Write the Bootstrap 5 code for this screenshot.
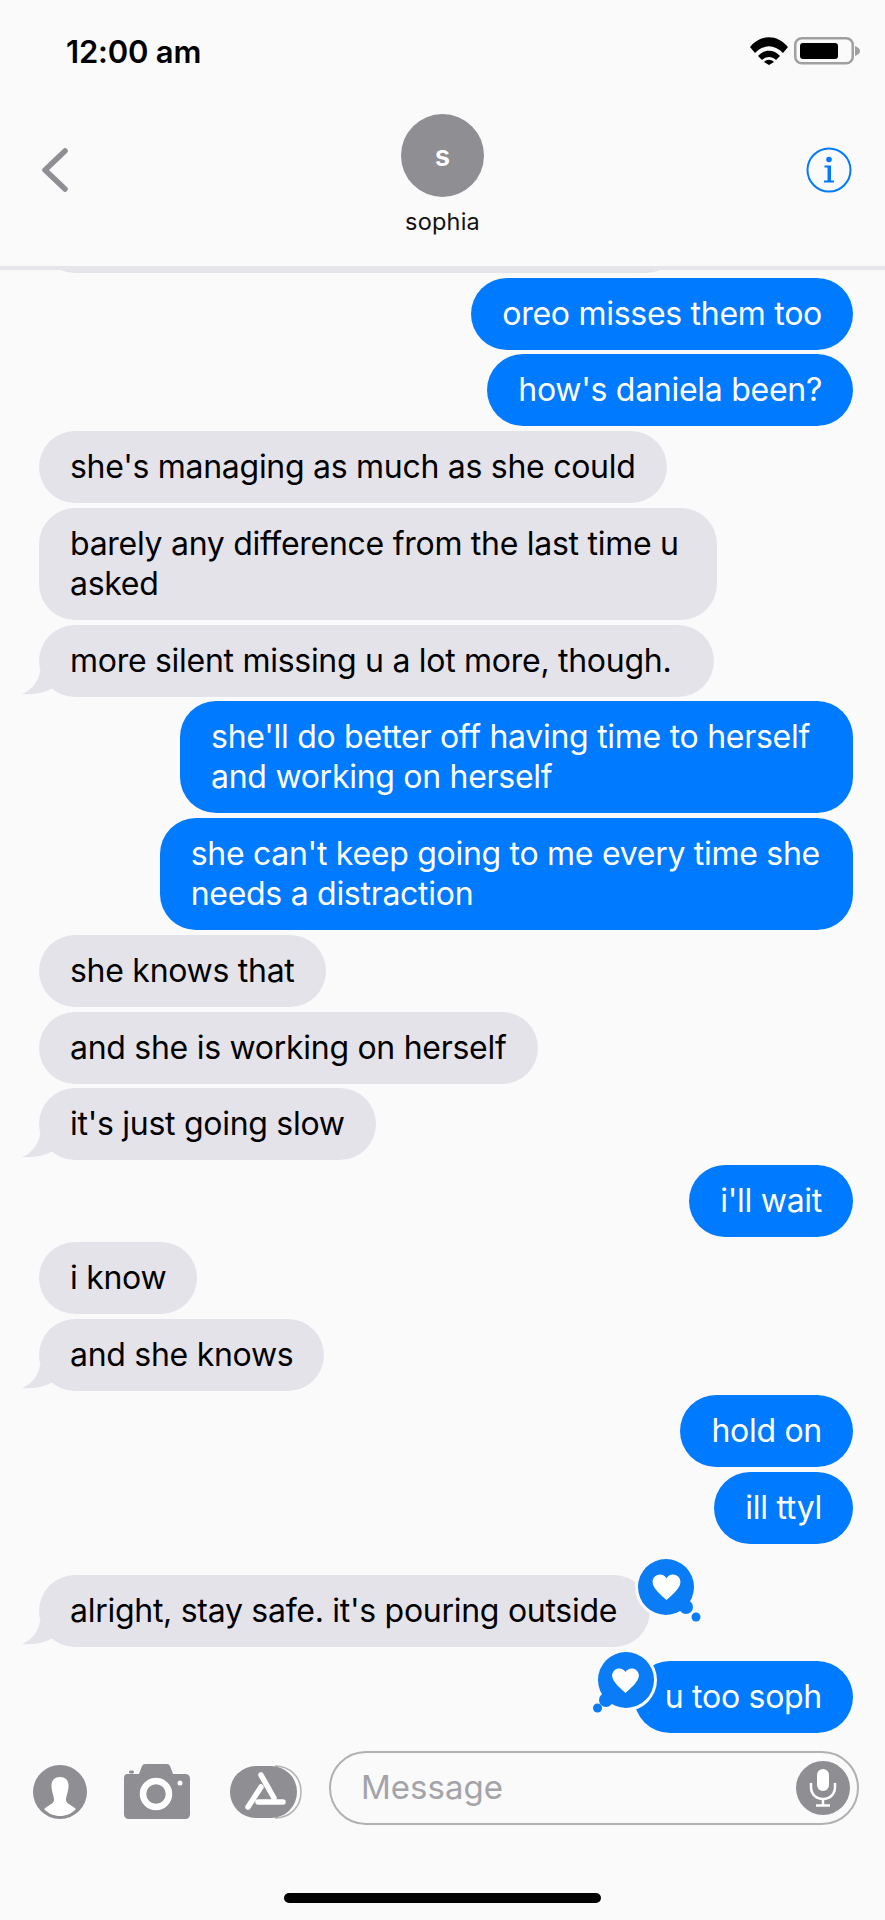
<!DOCTYPE html>
<html lang="en">
<head>
<meta charset="utf-8">
<title>Messages</title>
<link rel="stylesheet" href="https://cdn.jsdelivr.net/npm/bootstrap@5.3.0/dist/css/bootstrap.min.css">
<style>
html,body{margin:0;background:#fafafa}
.phone{width:885px;height:1920px;overflow:hidden;background:#fafafa;font-family:Inter,"Liberation Sans",sans-serif}
.statusbar{height:114px;padding:0 25px 0 66px;flex:none}
.clock{font-size:31px;font-weight:600;line-height:36px;color:#000;margin-top:34px;letter-spacing:-.2px}
.status-icons{margin-top:37px}
.chathead{height:156px;padding:0 33px 0 41px;border-bottom:4px solid #e5e5ea;flex:none;position:relative;z-index:2;background:#fafafa}
.back{margin-top:34px}
.person{position:absolute;left:0;right:0;top:0}
.avatar{width:83px;height:83px;background:#8e8e93;color:#fff;font-size:28px;font-weight:600}
.pname{font-size:23.5px;line-height:28px;margin-top:11px;color:#111;letter-spacing:.2px}
.info{margin-top:33px}
.thread{flex:1 1 0;min-height:0;overflow:hidden;padding:0 32px 0 39px}
.bubble{position:relative;font-size:32px;letter-spacing:-.28px;line-height:40px;padding:16px 31px;border-radius:36px;white-space:nowrap;margin-top:4.75px;flex:none}
.bubble-in{background:#e5e3ea;color:#000;align-self:flex-start}
.bubble-out{background:#007aff;color:#fff;align-self:flex-end}
.bubble-clipped{width:643px;height:72px}
.wrap-s{padding-right:33px}
.wrap-m{padding-right:38px}
.wrap-l{padding-right:43px}
.after-gap{margin-top:31px}
.after-react{margin-top:14px}
.tail{position:absolute;left:-21px;bottom:0;width:50px;height:26px}
.tapback{position:absolute;width:86px;height:84px}
.tb-in{right:-71px;top:-19px}
.tb-out{left:-41px;top:-12px}
.composer{height:187px;flex:none;padding:18px 26px 0 33px}
.tool-row{height:73px}
.tool-icon{margin-top:8px;flex:none}
.tool-cam{margin-left:36px}
.tool-app{margin-left:39px}
.msgbox{flex:1;height:74px;margin-left:27px;border:2px solid #b1b1b1;border-radius:37px;padding:0 7px 0 30px;color:#a4a4a8;font-size:33px}
.homebar{width:317px;height:10px;border-radius:5px;background:#000;margin:69px 0 0 251px}
</style>
</head>
<body>
<div class="phone d-flex flex-column">
  <svg width="0" height="0" class="position-absolute"><defs>
    <symbol id="tailshape" viewBox="0 0 50 26"><path d="M22 0 C21 10 14 19 4 23 C16 24 26 22 35 17 L48 10 L48 0Z" fill="#e5e3ea"/></symbol>
    <symbol id="heart" viewBox="0 0 32 28"><path d="M16 28 C12 24 1 16 1 8.500 C1 3.500 5 0.500 9 0.500 C12 0.500 14.500 2 16 4.500 C17.500 2 20 0.500 23 0.500 C27 0.500 31 3.500 31 8.500 C31 16 20 24 16 28Z" fill="#fff"/></symbol>
  </defs></svg>

  <div class="statusbar d-flex justify-content-between align-items-start">
    <div class="clock">12:00 am</div>
    <svg class="status-icons" width="111" height="28" viewBox="0 0 111 28">
      <path d="M1 10 C12 -3 28 -3 39 10 L34 16 C25 7 15 7 6 16Z M9 19 C15 12 25 12 31 19 L27 23 C23 19 17 19 13 23Z M15 25 C18 22 22 22 25 25 L20 28Z" fill="#000"/>
      <rect x="46.250" y="1.250" width="57.500" height="25" rx="6.500" fill="none" stroke="#a0a0a0" stroke-width="2.500"/>
      <rect x="51" y="6" width="38" height="16" rx="3" fill="#000"/>
      <path d="M106 9 C109 10 111 12 111 14 C111 16 109 18 106 19Z" fill="#a0a0a0"/>
    </svg>
  </div>

  <div class="chathead d-flex justify-content-between align-items-start">
    <svg class="back" width="28" height="44" viewBox="0 0 28 44"><path d="M24 3 L4 22 L24 41" fill="none" stroke="#8e8e93" stroke-width="5.500" stroke-linecap="round" stroke-linejoin="round"/></svg>
    <div class="person d-flex flex-column align-items-center">
      <div class="avatar rounded-circle d-flex align-items-center justify-content-center">s</div>
      <div class="pname">sophia</div>
    </div>
    <svg class="info" width="46" height="46" viewBox="0 0 46 46"><circle cx="23" cy="23" r="21.500" fill="none" stroke="#007aff" stroke-width="2"/><circle cx="23" cy="12.500" r="2.800" fill="#007aff"/><path d="M18.500 18.500 H25 V33.500 H28 V35.500 H18 V33.500 H21.500 V20.500 H18.500Z" fill="#007aff"/></svg>
  </div>

  <div class="thread d-flex flex-column justify-content-end">
    <div class="bubble bubble-in bubble-clipped"></div>
    <div class="bubble bubble-out">oreo misses them too</div>
    <div class="bubble bubble-out">how's daniela been?</div>
    <div class="bubble bubble-in">she's managing as much as she could</div>
    <div class="bubble bubble-in wrap-m">barely any difference from the last time u<br>asked</div>
    <div class="bubble bubble-in wrap-l"><svg class="tail"><use href="#tailshape"/></svg>more silent missing u a lot more, though.</div>
    <div class="bubble bubble-out wrap-l">she'll do better off having time to herself<br>and working on herself</div>
    <div class="bubble bubble-out wrap-s">she can't keep going to me every time she<br>needs a distraction</div>
    <div class="bubble bubble-in">she knows that</div>
    <div class="bubble bubble-in">and she is working on herself</div>
    <div class="bubble bubble-in"><svg class="tail"><use href="#tailshape"/></svg>it's just going slow</div>
    <div class="bubble bubble-out">i'll wait</div>
    <div class="bubble bubble-in">i know</div>
    <div class="bubble bubble-in"><svg class="tail"><use href="#tailshape"/></svg>and she knows</div>
    <div class="bubble bubble-out">hold on</div>
    <div class="bubble bubble-out">ill ttyl</div>
    <div class="bubble bubble-in after-gap wrap-s"><svg class="tail"><use href="#tailshape"/></svg>alright, stay safe. it's pouring outside
      <svg class="tapback tb-in" viewBox="0 0 86 84"><circle cx="31" cy="31" r="31" fill="#fafafa"/><circle cx="31" cy="31" r="28" fill="#0a7cf5"/><circle cx="51" cy="51" r="7" fill="#0a7cf5"/><circle cx="61" cy="61" r="4.500" fill="#0a7cf5"/><use href="#heart" x="16" y="18" width="31" height="26"/></svg>
    </div>
    <div class="bubble bubble-out after-react">u too soph
      <svg class="tapback tb-out" viewBox="0 0 86 84"><circle cx="33" cy="31" r="31" fill="#fafafa"/><circle cx="33" cy="31" r="28" fill="#0a7cf5"/><circle cx="13" cy="51" r="7" fill="#0a7cf5"/><circle cx="4.500" cy="59" r="4.500" fill="#0a7cf5"/><use href="#heart" x="18" y="19" width="29" height="25"/></svg>
    </div>
  </div>

  <div class="composer">
    <div class="tool-row d-flex align-items-center">
      <svg width="54" height="54" viewBox="0 0 54 54" class="tool-icon"><circle cx="27" cy="27" r="27" fill="#8e8e93"/><path d="M27 12 C33 12 36 16 35.500 22 C35 28 33 31 33 35 C33 39 39 40 43 44 C38 49 33 51 27 51 C21 51 16 49 11 44 C15 40 21 39 21 35 C21 31 19 28 18.500 22 C18 16 21 12 27 12Z" fill="#fff"/></svg>
      <svg width="68" height="56" viewBox="0 0 68 56" class="tool-icon tool-cam"><path d="M4 10 H16 L19 2 Q20 0 22 0 H44 Q46 0 47 2 L50 10 H62 Q67 10 67 15 V50 Q67 55 62 55 H6 Q1 55 1 50 V15 Q1 10 4 10Z" fill="#8e8e93"/><rect x="6" y="6.500" width="5" height="3" rx="1.500" fill="#8e8e93"/><circle cx="33" cy="30" r="13" fill="none" stroke="#fff" stroke-width="6.500"/><circle cx="57" cy="19" r="2.500" fill="#fff"/></svg>
      <svg width="72" height="54" viewBox="0 0 72 54" class="tool-icon tool-app"><path d="M45 1 C60 1 71 12 71 27 C71 42 60 53 45 53" fill="none" stroke="#b3b3b6" stroke-width="1.500"/><rect x="0" y="1" width="67" height="52" rx="26" fill="#8e8e93"/><path d="M31 10 L44 33 M18 42 L31 22 M28 37 H53" stroke="#fff" stroke-width="5.500" stroke-linecap="round" fill="none"/></svg>
      <div class="msgbox d-flex align-items-center justify-content-between">
        <span>Message</span>
        <svg width="54" height="54" viewBox="0 0 54 54"><circle cx="27" cy="27" r="27" fill="#8e8e93"/><rect x="21" y="8" width="12" height="22" rx="6" fill="#fff"/><path d="M15 22 V26 C15 33 20 38 27 38 C34 38 39 33 39 26 V22" fill="none" stroke="#fff" stroke-width="2.500"/><path d="M27 38 V44 M20 44.500 H34" stroke="#fff" stroke-width="2.500"/></svg>
      </div>
    </div>
    <div class="homebar"></div>
  </div>
</div>
<script src="https://cdn.jsdelivr.net/npm/bootstrap@5.3.0/dist/js/bootstrap.bundle.min.js"></script>
</body>
</html>
